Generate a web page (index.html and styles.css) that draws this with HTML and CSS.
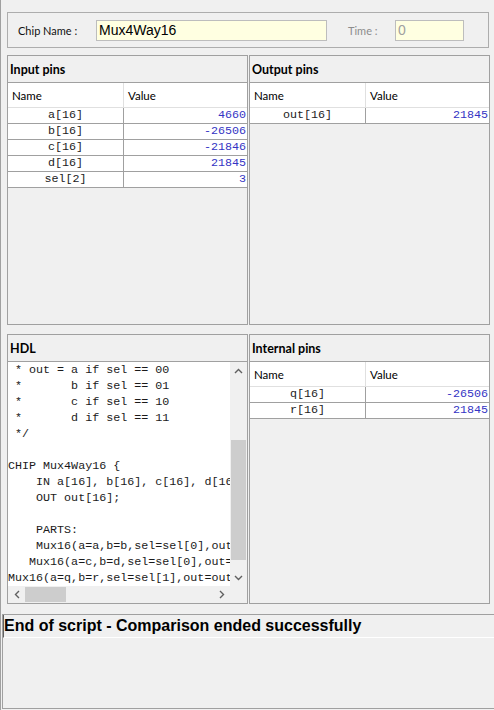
FILE: index.html
```html
<!DOCTYPE html>
<html>
<head>
<meta charset="utf-8">
<link rel="stylesheet" href="styles.css">
</head>
<body>
<div class="app">
  <div class="chipbar">
    <span class="chip-label">Chip Name :</span>
    <div class="field field-chip">Mux4Way16</div>
    <span class="time-label">Time :</span>
    <div class="field field-time">0</div>
  </div>

  <div class="grid">
    <section class="panel">
      <div class="panel-title">Input pins</div>
      <div class="table-wrap">
        <div class="pins">
          <div class="h name">Name</div><div class="h val">Value</div>
          <div class="c name">a[16]</div><div class="c val">4660</div>
          <div class="c name">b[16]</div><div class="c val">-26506</div>
          <div class="c name">c[16]</div><div class="c val">-21846</div>
          <div class="c name">d[16]</div><div class="c val">21845</div>
          <div class="c name">sel[2]</div><div class="c val">3</div>
        </div>
      </div>
    </section>

    <section class="panel">
      <div class="panel-title">Output pins</div>
      <div class="table-wrap">
        <div class="pins">
          <div class="h name">Name</div><div class="h val">Value</div>
          <div class="c name">out[16]</div><div class="c val">21845</div>
        </div>
      </div>
    </section>

    <section class="panel">
      <div class="panel-title">HDL</div>
      <div class="hdl-body">
        <pre class="code"> * out = a if sel == 00
 *       b if sel == 01
 *       c if sel == 10
 *       d if sel == 11
 */

CHIP Mux4Way16 {
    IN a[16], b[16], c[16], d[16], sel[2];
    OUT out[16];

    PARTS:
    Mux16(a=a,b=b,sel=sel[0],out=q);
   Mux16(a=c,b=d,sel=sel[0],out=r);
Mux16(a=q,b=r,sel=sel[1],out=out);</pre>
        <div class="vscroll">
          <div class="sbtn"><svg width="9" height="6" viewBox="0 0 9 6"><path d="M1 5 L4.5 1.5 L8 5" fill="none" stroke="#606060" stroke-width="1.4"/></svg></div>
          <div class="vgap-top"></div>
          <div class="vthumb"></div>
          <div class="vgap-bot"></div>
          <div class="sbtn"><svg width="9" height="6" viewBox="0 0 9 6"><path d="M1 1 L4.5 4.5 L8 1" fill="none" stroke="#606060" stroke-width="1.4"/></svg></div>
        </div>
        <div class="hscroll">
          <div class="sbtn"><svg width="6" height="9" viewBox="0 0 6 9"><path d="M5 1 L1.5 4.5 L5 8" fill="none" stroke="#606060" stroke-width="1.4"/></svg></div>
          <div class="hthumb"></div>
          <div class="hgap"></div>
          <div class="sbtn"><svg width="6" height="9" viewBox="0 0 6 9"><path d="M1 1 L4.5 4.5 L1 8" fill="none" stroke="#606060" stroke-width="1.4"/></svg></div>
        </div>
        <div class="corner"></div>
      </div>
    </section>

    <section class="panel">
      <div class="panel-title">Internal pins</div>
      <div class="table-wrap">
        <div class="pins">
          <div class="h name">Name</div><div class="h val">Value</div>
          <div class="c name">q[16]</div><div class="c val">-26506</div>
          <div class="c name">r[16]</div><div class="c val">21845</div>
        </div>
      </div>
    </section>
  </div>

  <div class="message">
    <div class="msg-line">End of script - Comparison ended successfully</div>
    <div class="msg-body"></div>
  </div>
</div>
</body>
</html>
```
FILE: styles.css
```css
* { box-sizing: border-box; }
html, body { margin: 0; padding: 0; }
body {
  width: 494px;
  height: 710px;
  background: #f0f0f0;
  font-family: Lato, "Liberation Sans", Arial, sans-serif;
  font-size: 11.5px;
  color: #000;
  overflow: hidden;
}
.app {
  height: 710px;
  border-left: 1px solid #a0a0a0;
  padding-top: 12px;
}
.chipbar {
  margin-left: 6px;
  width: 482px;
  height: 36px;
  border: 1px solid #adadad;
  display: flex;
  align-items: center;
  padding-left: 10px;
}
.chip-label { width: 78px; color: #111; font-size: 11px; }
.field {
  height: 21px;
  border: 1px solid #bdbdbd;
  background: #ffffe1;
  display: flex;
  align-items: center;
  padding-left: 2px;
  font-family: "Liberation Sans", Arial, sans-serif;
  font-size: 14px;
}
.field-chip { width: 231px; color: #000; }
.time-label { margin-left: 21px; width: 47px; color: #8c8c8c; font-size: 11px; }
.field-time { width: 69px; color: #a0a0a0; }

.grid {
  margin: 7px 0 0 6px;
  display: grid;
  grid-template-columns: 241px 241px;
  grid-template-rows: 270px 270px;
  column-gap: 1px;
  row-gap: 9px;
}
.panel {
  border: 1px solid #a0a0a0;
  display: flex;
  flex-direction: column;
  min-height: 0;
}
.panel-title {
  flex: none;
  height: 26px;
  padding-left: 2px;
  font-weight: bold;
  font-size: 12.5px;
  display: flex;
  align-items: center;
}
.table-wrap {
  flex: 1;
  border-top: 1px solid #a0a0a0;
}
.pins {
  display: grid;
  grid-template-columns: 116px 123px;
}
.pins .h {
  height: 25px;
  background: #fff;
  border-bottom: 1px solid #e0e0e0;
  padding-left: 4px;
  display: flex;
  align-items: center;
}
.pins .h.name { border-right: 1px solid #e0e0e0; }
.pins .c {
  height: 16px;
  background: #fff;
  border-bottom: 1px solid #a0a0a0;
  font-family: "Liberation Mono", "Courier New", monospace;
  font-size: 11.7px;
  line-height: 15px;
  overflow: hidden;
}
.pins .c.name {
  text-align: center;
  border-right: 1px solid #a0a0a0;
  color: #222;
}
.pins .c.val {
  text-align: right;
  padding-right: 1px;
  color: #3434c4;
}

.hdl-body {
  flex: 1;
  min-height: 0;
  border-top: 1px solid #a0a0a0;
  display: grid;
  grid-template-columns: 1fr 17px;
  grid-template-rows: 1fr 17px;
}
.code {
  margin: 0;
  background: #fff;
  overflow: hidden;
  font-family: "Liberation Mono", "Courier New", monospace;
  font-size: 11.7px;
  line-height: 16px;
  color: #1a1a1a;
  white-space: pre;
}
.vscroll {
  background: #f0f0f0;
  display: flex;
  flex-direction: column;
}
.sbtn {
  flex: none;
  width: 17px;
  height: 17px;
  display: flex;
  align-items: center;
  justify-content: center;
}
.vgap-top { height: 61px; flex: none; }
.vthumb { height: 120px; flex: none; margin: 0 1px; background: #cdcdcd; }
.vgap-bot { flex: 1; }
.hscroll {
  background: #f0f0f0;
  display: flex;
}
.hthumb { width: 41px; flex: none; margin: 1px 0; background: #cdcdcd; }
.hgap { flex: 1; }
.corner { background: #f0f0f0; }

.message {
  margin: 10px 0 0 1px;
  height: 95px;
  border: 1px solid #a0a0a0;
  border-right: none;
}
.msg-line {
  height: 23px;
  border-left: 1px solid #606060;
  border-bottom: 1px solid #fff;
  display: flex;
  align-items: center;
  font-family: "Liberation Sans", Arial, sans-serif;
  font-weight: bold;
  font-size: 16px;
  white-space: nowrap;
}
```
